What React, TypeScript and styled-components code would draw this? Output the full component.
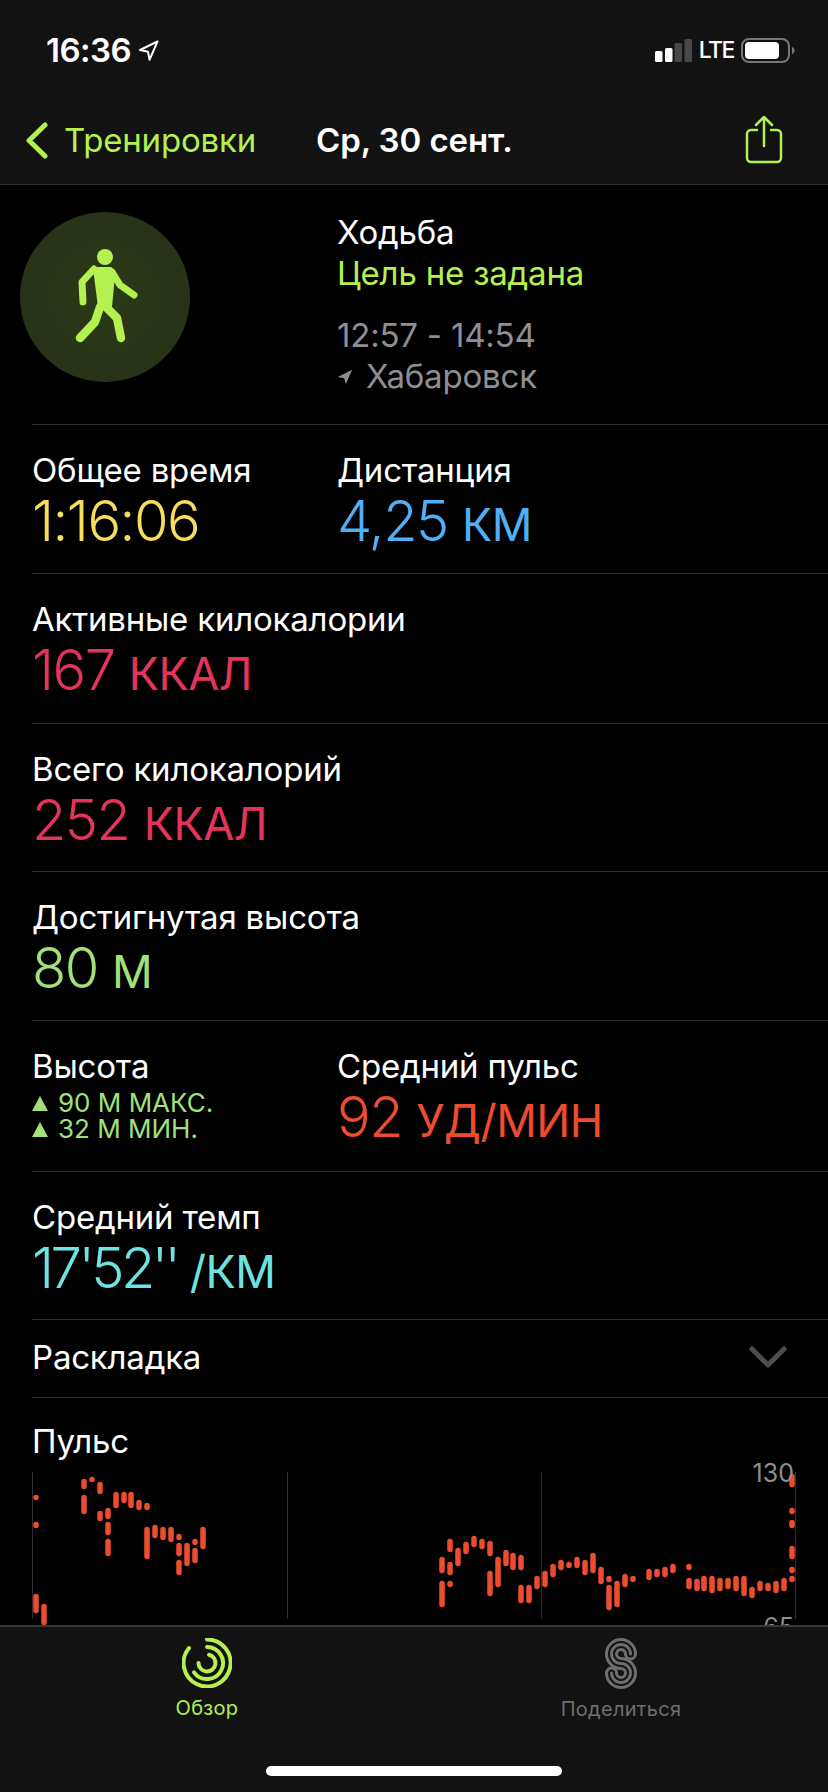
import React from 'react';
import styled, { createGlobalStyle } from 'styled-components';

const LIME = '#b4f04f';
const SF = '"Inter", "Liberation Sans", sans-serif';

const GlobalStyle = createGlobalStyle`
  html, body { margin: 0; padding: 0; background: #000; }
  body { font-family: ${SF}; color: #fff; -webkit-font-smoothing: antialiased; }
`;

const Screen = styled.div`
  width: 828px;
  height: 1792px;
  display: flex;
  flex-direction: column;
  background: #000;
  overflow: hidden;
`;

const TopBar = styled.header`
  height: 185px;
  flex: none;
  background: #121212;
  border-bottom: 1px solid #2c2c2e;
  box-sizing: border-box;
`;

const StatusBar = styled.div`
  height: 100px;
  padding: 30px 33px 0 46px;
  box-sizing: border-box;
  display: flex;
  align-items: flex-start;
  justify-content: space-between;
`;

const Clock = styled.div`
  display: flex;
  align-items: center;
  gap: 7px;
  font-size: 33px;
  font-weight: 600;
  letter-spacing: -0.5px;
  line-height: 40px;
`;

const StatusRight = styled.div`
  display: flex;
  align-items: center;
  gap: 7px;
  height: 40px;
  font-size: 23px;
  font-weight: 500;
  letter-spacing: -1.5px;
`;

const NavBar = styled.nav`
  height: 80px;
  display: flex;
  align-items: center;
  padding: 0 45px 0 26px;
`;

const BackLink = styled.div`
  display: flex;
  align-items: center;
  gap: 16px;
  color: ${LIME};
  font-size: 33px;
  letter-spacing: -0.2px;
`;

const NavTitle = styled.div`
  margin-left: 60px;
  flex: 1;
  font-size: 33px;
  font-weight: 600;
  letter-spacing: -0.1px;
`;

const Content = styled.main`
  flex: 1;
  min-height: 0;
  overflow: hidden;
`;

const Summary = styled.section`
  height: 239px;
  padding: 27px 0 0 20px;
  display: flex;
  box-sizing: border-box;
`;

const Badge = styled.div`
  width: 170px;
  height: 170px;
  border-radius: 50%;
  background: radial-gradient(circle, #2c3a17 0%, #263017 100%);
  display: flex;
  align-items: center;
  justify-content: center;
  flex: none;
`;

const SummaryText = styled.div`
  margin-left: 147px;
  font-size: 33px;
  line-height: 41px;
  letter-spacing: -0.2px;
`;

const Goal = styled.div`
  color: ${LIME};
`;

const Gray = styled.div<{ $top?: number }>`
  color: #8e8e93;
  margin-top: ${({ $top }) => $top ?? 0}px;
  display: flex;
  align-items: center;
  gap: 13px;
`;

const Row = styled.section<{ $height: number }>`
  height: ${({ $height }) => $height}px;
  margin-left: 32px;
  border-top: 1px solid #2c2c2e;
  box-sizing: border-box;
  display: flex;
`;

const Cell = styled.div<{ $width?: number }>`
  width: ${({ $width }) => ($width ? `${$width}px` : 'auto')};
  padding-top: 26px;
  flex: none;
`;

const Label = styled.div`
  font-size: 33px;
  line-height: 38px;
  letter-spacing: -0.2px;
`;

const Value = styled.div<{ $color: string; $spacing?: number }>`
  color: ${({ $color }) => $color};
  font-size: 56px;
  font-weight: 300;
  line-height: 58px;
  margin-top: 3px;
  letter-spacing: ${({ $spacing }) => $spacing ?? -1.5}px;
`;

const Unit = styled.span`
  font-size: 45px;
  font-weight: 400;
  letter-spacing: -0.5px;
`;

const HeightList = styled.div`
  margin-top: 5px;
`;

const HeightLine = styled.div`
  color: #a2e07a;
  font-size: 26px;
  line-height: 26px;
  display: flex;
  align-items: center;
  gap: 10px;
`;

const FoldRow = styled(Row)`
  align-items: center;
  justify-content: space-between;
  padding: 0 41px 3px 0;
`;

const ChartRow = styled(Row)`
  display: block;
  padding-top: 24px;
`;

const ChartBox = styled.div`
  position: relative;
  margin-top: 12px;
  width: 766px;
  height: 147px;
`;

const ChartSvg = styled.svg`
  display: block;
  overflow: visible;
`;

const AxisLabel = styled.span<{ $top: number }>`
  position: absolute;
  right: 4px;
  top: ${({ $top }) => $top}px;
  color: #8e8e93;
  font-size: 25px;
  line-height: 24px;
`;

const TabBar = styled.footer`
  height: 167px;
  flex: none;
  background: #121212;
  border-top: 2px solid #38383a;
  box-sizing: border-box;
  position: relative;
  display: flex;
  justify-content: space-around;
  padding: 11px 0 0;
`;

const Tab = styled.div<{ $active?: boolean }>`
  width: 300px;
  display: flex;
  flex-direction: column;
  align-items: center;
  gap: 8px;
  color: ${({ $active }) => ($active ? LIME : '#6e6e70')};
  font-size: 20px;
  line-height: 24px;
  letter-spacing: 0.3px;
`;

const HomeBar = styled.div`
  position: absolute;
  left: 266px;
  bottom: 16px;
  width: 296px;
  height: 10px;
  border-radius: 5px;
  background: #fff;
`;

// bars are read off the reference: centre x, top, bottom in chart pixels
const BARS: [number, number, number][] = [
  [4, 23, 28], [4, 50, 56], [4, 122, 141], [12, 132, 153],
  [52, 7, 17], [52, 23, 42], [60, 5, 10], [68, 10, 22], [68, 39, 49], [76, 36, 47], [76, 50, 63], [76, 67, 84],
  [84, 20, 36], [92, 20, 31], [99, 20, 36], [107, 28, 38], [115, 31, 38], [115, 55, 87], [123, 53, 66], [131, 55, 68],
  [139, 55, 70], [147, 62, 68], [147, 71, 84], [147, 88, 103], [155, 71, 94], [163, 67, 73], [163, 76, 91], [171, 55, 77],
  [410, 85, 101], [410, 109, 135], [418, 67, 80], [418, 90, 103], [418, 109, 115], [426, 76, 94], [434, 70, 82],
  [442, 64, 75], [450, 67, 77], [458, 69, 84], [458, 99, 124], [466, 85, 115], [474, 78, 94], [481, 81, 98], [489, 83, 98],
  [489, 113, 131], [497, 113, 131], [505, 104, 117], [513, 99, 115], [521, 92, 105], [529, 88, 98], [537, 90, 96],
  [545, 85, 96], [553, 88, 103], [561, 81, 101], [569, 95, 112], [577, 104, 110], [577, 113, 138], [585, 109, 135],
  [593, 102, 115], [601, 104, 110], [617, 97, 108], [625, 97, 105], [633, 95, 105], [641, 92, 101], [657, 92, 98],
  [657, 106, 117], [665, 107, 119], [672, 104, 119], [680, 104, 121], [688, 106, 119], [696, 106, 117], [704, 104, 119],
  [712, 104, 124], [720, 115, 126], [728, 109, 119], [736, 111, 119], [744, 109, 121], [752, 106, 119],
  [760, 2, 15], [760, 36, 42], [760, 48, 56], [760, 74, 87], [760, 95, 101], [760, 104, 110],
];

const Arrow = ({ size, color }: { size: number; color: string }) => (
  <svg width={size} height={size} viewBox="0 0 20 20">
    <path d="M19 1 1 10l8 1.500L11 19Z" fill={color} />
  </svg>
);

const OutlineArrow = () => (
  <svg width="21" height="21" viewBox="0 0 21 21">
    <path d="M19.500 1.500 2 10l8 1.800 1.500 8Z" fill="none" stroke="#fff" strokeWidth="2" strokeLinejoin="round" />
  </svg>
);

const Signal = () => (
  <svg width="37" height="23" viewBox="0 0 37 23">
    <rect x="0" y="12" width="7.500" height="11" rx="1.500" fill="#fff" />
    <rect x="10" y="9" width="7.500" height="14" rx="1.500" fill="#fff" />
    <rect x="19.500" y="4" width="7.500" height="19" rx="1.500" fill="#48484a" />
    <rect x="29.500" y="0" width="7.500" height="23" rx="1.500" fill="#48484a" />
  </svg>
);

const Battery = () => (
  <svg width="54" height="25" viewBox="0 0 54 25">
    <rect x="1" y="1" width="47" height="23" rx="7" fill="none" stroke="#77777a" strokeWidth="2" />
    <rect x="4" y="4" width="34" height="17" rx="4" fill="#fff" />
    <path d="M51 9c1.800.500 2.600 2 2.600 3.500s-.8 3-2.600 3.500Z" fill="#77777a" />
  </svg>
);

const Chevron = () => (
  <svg width="22" height="37" viewBox="0 0 22 37">
    <path d="M19 3 3 18.500 19 34" fill="none" stroke={LIME} strokeWidth="5" strokeLinecap="round" strokeLinejoin="round" />
  </svg>
);

const Share = () => (
  <svg width="38" height="48" viewBox="0 0 38 48">
    <path d="M12 14H6a4 4 0 0 0-4 4v24a4 4 0 0 0 4 4h26a4 4 0 0 0 4-4V18a4 4 0 0 0-4-4h-6" fill="none" stroke={LIME} strokeWidth="2.500" strokeLinecap="round" />
    <path d="M19 30V2M11 9l8-8 8 8" fill="none" stroke={LIME} strokeWidth="2.500" strokeLinecap="round" strokeLinejoin="round" />
  </svg>
);

const Walker = () => (
  <svg width="70" height="98" viewBox="0 0 70 98" fill="none" stroke={LIME} strokeLinecap="round" strokeLinejoin="round">
    <circle cx="35" cy="9" r="8" fill={LIME} stroke="none" />
    <path d="M24 20h17l3 8-3 31H29Z" fill={LIME} strokeWidth="2" />
    <path d="M24 21 12 34l1 20" strokeWidth="7" />
    <path d="M42 24l8 13 14 10" strokeWidth="7" />
    <path d="M30 59l-5 15-15 16" strokeWidth="8.500" />
    <path d="M35 58l12 12 4 20" strokeWidth="8.500" />
  </svg>
);

const Rings = () => (
  <svg width="50" height="50" viewBox="10 9 50 50" fill="none" stroke={LIME} strokeWidth="4" strokeLinecap="round">
    <path d="M35 10.500A23.500 23.500 0 1 1 17 19" />
    <path d="M35 18A16 16 0 1 1 22 43.300" />
    <path d="M37 25.700A8.500 8.500 0 1 1 26.500 34" />
  </svg>
);

const Sharing = () => (
  <svg width="32" height="51" viewBox="0 0 32 51" fill="none" stroke="#6e6e70" strokeWidth="3" strokeLinecap="round">
    <path d="M30.500 16A14.500 14.500 0 1 0 16 30.500A4.500 4.500 0 1 1 11.500 35" />
    <path d="M25.500 16A9.500 9.500 0 1 0 16 25.500A9.500 9.500 0 1 1 6.500 35" />
    <path d="M20.500 16A4.500 4.500 0 1 0 16 20.500A14.500 14.500 0 1 1 1.500 35" />
    <path d="M30.500 16A5 5 0 0 1 20.500 16" />
    <path d="M1.500 35A5 5 0 0 1 11.500 35" />
  </svg>
);

const Tri = () => (
  <svg width="16" height="15" viewBox="0 0 16 15">
    <path d="M8 0 16 15H0Z" fill="#a2e07a" />
  </svg>
);

const FoldChevron = () => (
  <svg width="38" height="22" viewBox="0 0 38 22">
    <path d="M3 3l16 16L35 3" fill="none" stroke="#4e4e50" strokeWidth="5" strokeLinecap="round" strokeLinejoin="round" />
  </svg>
);

const HeartChart = () => (
  <ChartSvg width="766" height="153" viewBox="0 0 766 153">
    {[0.5, 255.5, 509.5, 763.5].map((x) => (
      <line key={x} x1={x} x2={x} y1="0" y2="147" stroke="#2e2e30" strokeWidth="1" />
    ))}
    {BARS.map(([x, a, b], i) => (
      <line
        key={i}
        x1={x}
        x2={x}
        y1={a + 2.5}
        y2={Math.max(b - 2.5, a + 2.6)}
        stroke="#ee4c2f"
        strokeWidth="5.5"
        strokeLinecap="round"
      />
    ))}
  </ChartSvg>
);

export default function App() {
  return (
    <Screen>
      <GlobalStyle />
      <TopBar>
        <StatusBar>
          <Clock>
            16:36 <OutlineArrow />
          </Clock>
          <StatusRight>
            <Signal />
            LTE
            <Battery />
          </StatusRight>
        </StatusBar>
        <NavBar>
          <BackLink>
            <Chevron />
            Тренировки
          </BackLink>
          <NavTitle>Ср, 30 сент.</NavTitle>
          <Share />
        </NavBar>
      </TopBar>

      <Content>
        <Summary>
          <Badge>
            <Walker />
          </Badge>
          <SummaryText>
            <div>Ходьба</div>
            <Goal>Цель не задана</Goal>
            <Gray $top={21}>12:57 - 14:54</Gray>
            <Gray>
              <Arrow size={16} color="#8e8e93" />
              Хабаровск
            </Gray>
          </SummaryText>
        </Summary>

        <Row $height={149}>
          <Cell $width={305}>
            <Label>Общее время</Label>
            <Value $color="#f7dd5c">1:16:06</Value>
          </Cell>
          <Cell>
            <Label>Дистанция</Label>
            <Value $color="#4fb0f5">
              4,25 <Unit>КМ</Unit>
            </Value>
          </Cell>
        </Row>
        <Row $height={150}>
          <Cell>
            <Label>Активные килокалории</Label>
            <Value $color="#e5345b">
              167 <Unit>ККАЛ</Unit>
            </Value>
          </Cell>
        </Row>
        <Row $height={148}>
          <Cell>
            <Label>Всего килокалорий</Label>
            <Value $color="#e5345b">
              252 <Unit>ККАЛ</Unit>
            </Value>
          </Cell>
        </Row>
        <Row $height={149}>
          <Cell>
            <Label>Достигнутая высота</Label>
            <Value $color="#a2e07a">
              80 <Unit>М</Unit>
            </Value>
          </Cell>
        </Row>
        <Row $height={151}>
          <Cell $width={305}>
            <Label>Высота</Label>
            <HeightList>
              <HeightLine>
                <Tri /> 90 М МАКС.
              </HeightLine>
              <HeightLine>
                <Tri /> 32 М МИН.
              </HeightLine>
            </HeightList>
          </Cell>
          <Cell>
            <Label>Средний пульс</Label>
            <Value $color="#ee4c2f">
              92 <Unit>УД/МИН</Unit>
            </Value>
          </Cell>
        </Row>
        <Row $height={148}>
          <Cell>
            <Label>Средний темп</Label>
            <Value $color="#6fe3e1" $spacing={-3.5}>
              17'52'' <Unit>/КМ</Unit>
            </Value>
          </Cell>
        </Row>
        <FoldRow $height={78}>
          <Label>Раскладка</Label>
          <FoldChevron />
        </FoldRow>
        <ChartRow $height={229}>
          <Label>Пульс</Label>
          <ChartBox>
            <HeartChart />
            <AxisLabel $top={-11}>130</AxisLabel>
            <AxisLabel $top={143}>65</AxisLabel>
          </ChartBox>
        </ChartRow>
      </Content>

      <TabBar>
        <Tab $active>
          <Rings />
          Обзор
        </Tab>
        <Tab>
          <Sharing />
          Поделиться
        </Tab>
        <HomeBar />
      </TabBar>
    </Screen>
  );
}
